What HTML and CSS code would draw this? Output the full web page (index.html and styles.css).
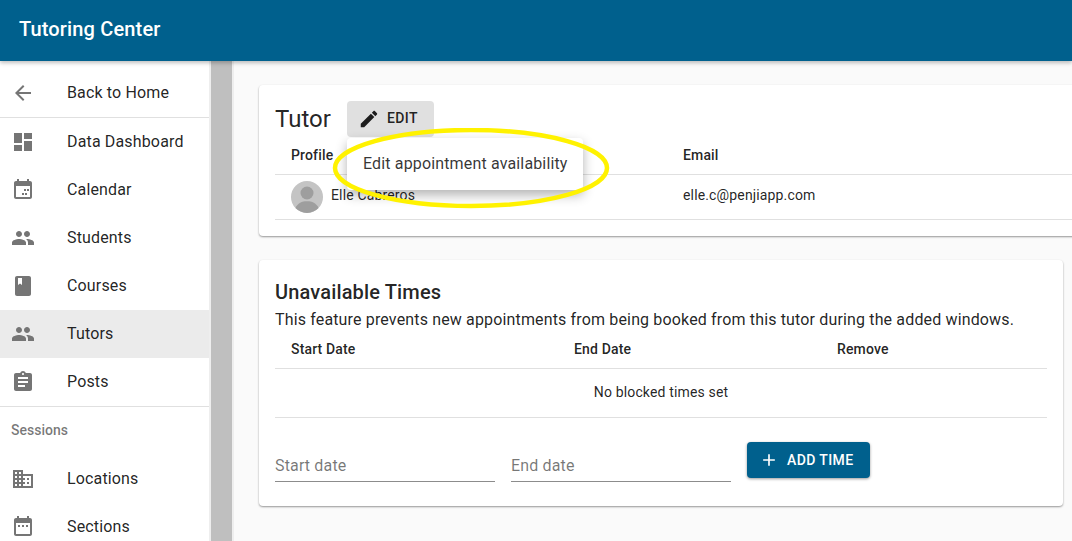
FILE: index.html
```html
<!DOCTYPE html>
<html lang="en">
<head>
<meta charset="utf-8">
<title>Tutoring Center</title>
<link rel="stylesheet" href="styles.css">
</head>
<body>
<header class="appbar"><h1 class="appbar-title">Tutoring Center</h1></header>
<div class="layout">
  <nav class="sidebar">
    <ul class="nav-list nav-list-top">
      <li class="nav-item"><svg class="nav-icon" viewBox="0 0 24 24"><path d="M20 11H7.83l5.59-5.59L12 4l-8 8 8 8 1.41-1.41L7.83 13H20v-2z"/></svg><span class="nav-text">Back to Home</span></li>
    </ul>
    <hr class="divider">
    <ul class="nav-list">
      <li class="nav-item"><svg class="nav-icon" viewBox="0 0 24 24"><path d="M3 13h8V3H3v10zm0 8h8v-6H3v6zm10 0h8V11h-8v10zm0-18v6h8V3h-8z"/></svg><span class="nav-text">Data Dashboard</span></li>
      <li class="nav-item"><svg class="nav-icon" viewBox="0 0 24 24"><path d="M19 3h-1V1h-2v2H8V1H6v2H5c-1.1 0-2 .9-2 2v14c0 1.1.9 2 2 2h14c1.1 0 2-.9 2-2V5c0-1.1-.9-2-2-2zm0 16H5V8h14v11zM13 11h2v2h-2zM16 11h2v2h-2zM11 15h2v2h-2zM14 15h2v2h-2z"/></svg><span class="nav-text">Calendar</span></li>
      <li class="nav-item"><svg class="nav-icon" viewBox="0 0 24 24"><path d="M16 11c1.66 0 2.99-1.34 2.99-3S17.66 5 16 5c-1.66 0-3 1.34-3 3s1.34 3 3 3zm-8 0c1.66 0 2.99-1.34 2.99-3S9.66 5 8 5C6.34 5 5 6.34 5 8s1.34 3 3 3zm0 2c-2.33 0-7 1.17-7 3.5V19h14v-2.5c0-2.33-4.67-3.5-7-3.5zm8 0c-.29 0-.62.02-.97.05 1.16.84 1.97 1.97 1.97 3.45V19h6v-2.5c0-2.33-4.67-3.5-7-3.5z"/></svg><span class="nav-text">Students</span></li>
      <li class="nav-item"><svg class="nav-icon" viewBox="0 0 24 24"><path d="M18 2H6c-1.1 0-2 .9-2 2v16c0 1.1.9 2 2 2h12c1.1 0 2-.9 2-2V4c0-1.100-.9-2-2-2zM7 4h4v7l-2-1.500L7 11V4z"/></svg><span class="nav-text">Courses</span></li>
      <li class="nav-item nav-item-active"><svg class="nav-icon" viewBox="0 0 24 24"><path d="M16 11c1.66 0 2.99-1.34 2.99-3S17.66 5 16 5c-1.66 0-3 1.34-3 3s1.34 3 3 3zm-8 0c1.66 0 2.99-1.34 2.99-3S9.66 5 8 5C6.34 5 5 6.34 5 8s1.34 3 3 3zm0 2c-2.33 0-7 1.17-7 3.5V19h14v-2.5c0-2.33-4.67-3.5-7-3.5zm8 0c-.29 0-.62.02-.97.05 1.16.84 1.97 1.97 1.97 3.45V19h6v-2.5c0-2.33-4.67-3.5-7-3.5z"/></svg><span class="nav-text">Tutors</span></li>
      <li class="nav-item"><svg class="nav-icon" viewBox="0 0 24 24"><path d="M19 3h-4.18C14.4 1.84 13.3 1 12 1c-1.3 0-2.4.84-2.82 2H5c-1.1 0-2 .9-2 2v14c0 1.1.9 2 2 2h14c1.1 0 2-.9 2-2V5c0-1.1-.9-2-2-2zm-7 0c.55 0 1 .45 1 1s-.45 1-1 1-1-.45-1-1 .45-1 1-1zm2 14H7v-2h7v2zm3-4H7v-2h10v2zm0-4H7V7h10v2z"/></svg><span class="nav-text">Posts</span></li>
    </ul>
    <hr class="divider">
    <div class="nav-subheader">Sessions</div>
    <ul class="nav-list">
      <li class="nav-item"><svg class="nav-icon" viewBox="0 0 24 24"><path d="M12 7V3H2v18h20V7H12zM6 19H4v-2h2v2zm0-4H4v-2h2v2zm0-4H4V9h2v2zm0-4H4V5h2v2zm4 12H8v-2h2v2zm0-4H8v-2h2v2zm0-4H8V9h2v2zm0-4H8V5h2v2zm10 12h-8v-2h2v-2h-2v-2h2v-2h-2V9h8v10zm-2-8h-2v2h2v-2zm0 4h-2v2h2v-2z"/></svg><span class="nav-text">Locations</span></li>
      <li class="nav-item"><svg class="nav-icon" viewBox="0 0 24 24"><path d="M19 3h-1V1h-2v2H8V1H6v2H5c-1.1 0-2 .9-2 2v14c0 1.1.9 2 2 2h14c1.1 0 2-.9 2-2V5c0-1.1-.9-2-2-2zm0 16H5V8h14v11zM7 10h2v2H7zM11 10h2v2h-2zM15 10h2v2h-2z"/></svg><span class="nav-text">Sections</span></li>
    </ul>
  </nav>
  <div class="gutter"></div>
  <main class="content">
    <section class="card card-tutor">
      <div class="card-heading">
        <h2 class="card-title">Tutor</h2>
        <button class="btn-edit"><svg class="btn-icon-edit" viewBox="0 0 24 24"><path d="M3 17.25V21h3.75L17.81 9.94l-3.75-3.75L3 17.25zM20.71 7.04c.39-.39.39-1.02 0-1.41l-2.34-2.34c-.39-.39-1.02-.39-1.41 0l-1.83 1.83 3.75 3.75 1.83-1.83z"/></svg><span class="btn-label">EDIT</span></button>
      </div>
      <div class="tutor-row tutor-head"><span>Profile</span><span>Email</span></div>
      <div class="tutor-row tutor-body">
        <span class="tutor-name">
          <svg class="avatar" viewBox="0 0 32 32"><circle cx="16" cy="16" r="16" fill="#c4c4c4"/><circle cx="16" cy="12" r="6.500" fill="#9e9e9e"/><path d="M4.500 27c2-5 6.500-6.800 11.500-6.800S25.500 22 27.500 27A16 16 0 0 1 4.500 27z" fill="#9e9e9e"/></svg>
          <span class="tutor-text">Elle Cabreros</span>
        </span>
        <span class="tutor-text">elle.c@penjiapp.com</span>
      </div>
    </section>
    <section class="card card-times">
      <h2 class="times-title">Unavailable Times</h2>
      <p class="times-desc">This feature prevents new appointments from being booked from this tutor during the added windows.</p>
      <div class="times-row times-head"><span>Start Date</span><span>End Date</span><span>Remove</span></div>
      <div class="times-empty">No blocked times set</div>
      <div class="times-form">
        <div class="field">Start date</div>
        <div class="field">End date</div>
        <button class="btn-add"><svg class="btn-icon" viewBox="0 0 24 24"><path d="M19 13h-6v6h-2v-6H5v-2h6V5h2v6h6v2z"/></svg><span class="btn-label-add">ADD TIME</span></button>
      </div>
    </section>
  </main>
</div>
<div class="menu">Edit appointment availability</div>
<svg class="highlight" viewBox="0 0 280 84"><ellipse cx="140" cy="40" rx="136" ry="38" fill="none" stroke="#fff200" stroke-width="4.500"/></svg>
</body>
</html>
```

FILE: styles.css
```css
* { box-sizing: border-box; }
html, body { height: 100%; }
body {
  margin: 0;
  height: 541px;
  overflow: hidden;
  position: relative;
  font-family: Roboto, "Liberation Sans", sans-serif;
  letter-spacing: 0.15px;
  color: rgba(0, 0, 0, 0.87);
  background: #fafafa;
}
.appbar {
  height: 61px;
  background: #00608d;
  display: flex;
  align-items: center;
  padding: 0 19px 4px;
  box-shadow: 0 2px 4px rgba(0, 0, 0, 0.25);
  position: relative;
  z-index: 2;
}
.appbar-title { margin: 0; font-size: 20px; font-weight: 500; color: #fff; line-height: 1; }
.layout { display: flex; height: 480px; }
.sidebar {
  width: 211px;
  flex: none;
  background: #fff;
  border-right: 2px solid #eeeeee;
}
.nav-list { list-style: none; margin: 0; padding: 0; }
.nav-list-top { padding-top: 8px; }
.nav-item {
  height: 48px;
  display: flex;
  align-items: center;
  gap: 32px;
  padding-left: 11px;
  font-size: 16px;
  color: rgba(0, 0, 0, 0.87);
}
.nav-item-active { background: #ebebeb; }
.nav-icon { width: 24px; height: 24px; flex: none; fill: #757575; }
.nav-text { margin-bottom: 2px; }
.divider { margin: 0; border: 0; height: 1px; background: #e0e0e0; }
.nav-subheader {
  height: 48px;
  line-height: 46px;
  padding-left: 11px;
  font-size: 14px;
  font-weight: 500;
  letter-spacing: 0;
  color: rgba(0, 0, 0, 0.54);
}
.gutter { width: 21px; flex: none; background: #bfbfbf; }
.content {
  flex: 1;
  min-width: 0;
  padding: 24px 9px 0 25px;
  border-left: 2px solid #eeeeee;
}
.card {
  background: #fff;
  border-radius: 4px;
  box-shadow: 0 1px 2px rgba(0, 0, 0, 0.4);
  padding: 0 16px;
}
.card-tutor { height: 151px; margin-right: -30px; padding-top: 16px; }
.card-heading { display: flex; align-items: flex-start; gap: 16px; height: 35px; }
.card-title { margin: 0; font-size: 24px; font-weight: 400; line-height: 36px; letter-spacing: 0; }
.btn-edit {
  width: 87px;
  height: 36px;
  border: 0;
  border-radius: 4px;
  background: #e0e0e0;
  display: flex;
  align-items: center;
  padding: 0 0 0 11px;
  gap: 7px;
  font: 500 14px Roboto, sans-serif;
  letter-spacing: 0.4px;
  color: rgba(0, 0, 0, 0.87);
}
.btn-icon { width: 20px; height: 20px; fill: currentColor; flex: none; }
.btn-icon-edit { width: 22px; height: 22px; fill: currentColor; flex: none; }
.btn-label { margin-bottom: 2px; }
.btn-label-add { margin-bottom: 1px; }
.tutor-row { display: grid; grid-template-columns: 392px 1fr; padding-left: 16px; font-size: 14px; border-bottom: 1px solid #e0e0e0; align-items: center; }
.tutor-head { height: 39px; font-weight: 500; }
.tutor-body { height: 45px; }
.tutor-name { display: flex; align-items: center; gap: 8px; }
.tutor-text { margin-bottom: 4px; }
.avatar { width: 32px; height: 32px; flex: none; }
.card-times { height: 246px; margin-top: 24px; padding-top: 20px; }
.times-title { margin: 0; font-size: 20px; font-weight: 500; line-height: 24px; }
.times-desc { margin: 4px 0 0; font-size: 16px; line-height: 24px; }
.times-row { display: grid; grid-template-columns: 283px 263px 1fr; padding-left: 16px; font-size: 14px; font-weight: 500; align-items: center; border-bottom: 1px solid #e0e0e0; }
.times-head { height: 37px; padding-bottom: 2px; }
.times-empty { height: 49px; line-height: 46px; text-align: center; font-size: 14px; border-bottom: 1px solid #e0e0e0; }
.times-form { display: flex; align-items: flex-start; gap: 16px; margin-top: 24px; }
.field {
  width: 220px;
  height: 40px;
  padding-top: 14px;
  font-size: 16px;
  line-height: 19px;
  color: rgba(0, 0, 0, 0.54);
  border-bottom: 1px solid #8c8c8c;
}
.btn-add {
  width: 123px;
  height: 36px;
  border: 0;
  border-radius: 4px;
  background: #00608d;
  color: #fff;
  display: flex;
  align-items: center;
  gap: 8px;
  padding: 0 0 0 12px;
  font: 500 14px Roboto, sans-serif;
  letter-spacing: 0.4px;
  box-shadow: 0 1px 3px rgba(0, 0, 0, 0.4);
}
.menu {
  position: absolute;
  left: 347px;
  top: 138px;
  width: 236px;
  height: 52px;
  line-height: 52px;
  padding-left: 16px;
  background: #fff;
  border-radius: 4px;
  font-size: 16px;
  color: rgba(0, 0, 0, 0.8);
  box-shadow: 0 5px 12px rgba(0, 0, 0, 0.3);
  white-space: nowrap;
}
.highlight { position: absolute; left: 331px; top: 128px; width: 280px; height: 84px; }
```
